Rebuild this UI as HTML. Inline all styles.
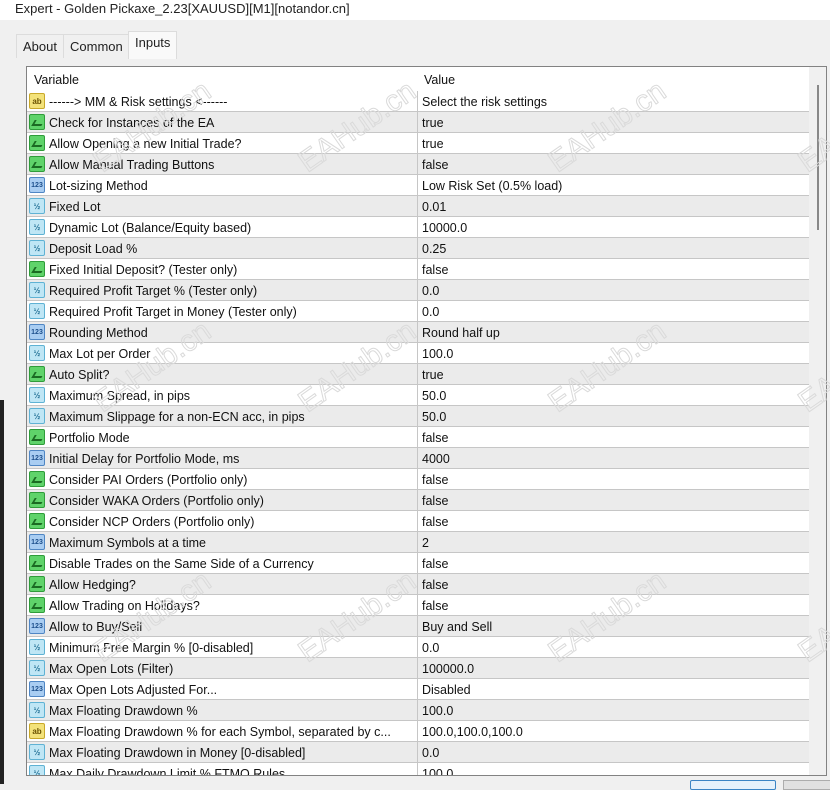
<!DOCTYPE html>
<html><head><meta charset="utf-8"><style>
*{margin:0;padding:0;box-sizing:border-box}
body{width:830px;height:784px;overflow:hidden;background:#f0f0f0;font-family:"Liberation Sans",sans-serif;font-size:12.5px;color:#111;position:relative}
.title{position:absolute;left:15px;top:1px;font-size:13px;color:#222}
.tab{position:absolute;top:34px;height:24px;padding:4px 6px;font-size:13px;color:#222;border:1px solid #dcdcdc;border-bottom:none;background:#f0f0f0}
.tab.act{top:31px;height:28px;background:#f9f9f9;padding-top:3px}
.panel{position:absolute;left:26px;top:66px;width:801px;height:710px;border:1px solid #828282;background:#fff;overflow:hidden}
.hdr{position:absolute;left:0;top:0;height:24px;width:782px;background:#fff}
.hdr span{position:absolute;top:6px}
.row{position:absolute;left:0;width:782px;height:21px;border-bottom:1px solid #c6c6c6}
.row.g{background:#ebebeb}
.row .n{position:absolute;left:22px;top:4px;white-space:nowrap;width:366px;overflow:hidden}
.row .v{position:absolute;left:395px;top:4px;white-space:nowrap}
.row .d{position:absolute;left:390px;top:0;width:1px;height:21px;background:#c6c6c6}
.ic{position:absolute;left:2px;top:2px;width:16px;height:16px;border-radius:2px;font-size:8px;line-height:16px;text-align:center;font-weight:bold}
.ab{background:#f3e27a;border:1px solid #c9a92a;color:#6a5200}
.bo{background:#5fd36a;border:1px solid #2f9c3a}
.bo:after{content:"";position:absolute;left:3px;top:5px;width:8px;height:4px;border-left:2px solid #1b6b23;border-bottom:2px solid #1b6b23;transform:skewX(-30deg)}
.in{background:#a9cdf2;border:1px solid #4f86c4;color:#1d4f8c;font-size:7px}
.db{background:#bfe6f5;border:1px solid #5fb2d4;color:#1f6e93;font-size:8px}
.sb{position:absolute;left:782px;top:0;width:18px;height:710px;background:#f0f0f0}
.th{position:absolute;left:8px;top:18px;width:2px;height:145px;background:#888}
.wm{position:absolute;color:transparent;-webkit-text-stroke:1px #dadada;font-size:30px;transform:rotate(-35deg);font-family:"Liberation Sans",sans-serif;white-space:nowrap}
</style></head><body>
<div style="position:absolute;left:0;top:0;width:830px;height:20px;background:#fff"></div>
<div class="title">Expert - Golden Pickaxe_2.23[XAUUSD][M1][notandor.cn]</div>
<div style="position:absolute;left:0;top:400px;width:4px;height:384px;background:#222"></div>
<div class="tab" style="left:16px">About</div>
<div class="tab" style="left:63px">Common</div>
<div class="tab act" style="left:128px">Inputs</div>
<div class="panel">
<div class="hdr"><span style="left:7px">Variable</span><span style="left:397px">Value</span></div>
<div id="rows"></div>
<div class="sb"><div class="th"></div></div>
</div>
<div style="position:absolute;left:690px;top:780px;width:86px;height:10px;border:1px solid #3b84c4;border-radius:2px;background:#e5f1fb"></div>
<div style="position:absolute;left:783px;top:780px;width:60px;height:10px;border:1px solid #adadad;background:#e1e1e1"></div>
<div class="wm" style="left:85px;top:110px">EAHub.cn</div>
<div class="wm" style="left:290px;top:110px">EAHub.cn</div>
<div class="wm" style="left:540px;top:110px">EAHub.cn</div>
<div class="wm" style="left:85px;top:350px">EAHub.cn</div>
<div class="wm" style="left:290px;top:350px">EAHub.cn</div>
<div class="wm" style="left:540px;top:350px">EAHub.cn</div>
<div class="wm" style="left:85px;top:600px">EAHub.cn</div>
<div class="wm" style="left:290px;top:600px">EAHub.cn</div>
<div class="wm" style="left:540px;top:600px">EAHub.cn</div>
<div class="wm" style="left:790px;top:110px">EAHub.cn</div>
<div class="wm" style="left:790px;top:350px">EAHub.cn</div>
<div class="wm" style="left:790px;top:600px">EAHub.cn</div>
<script>
var d=[["ab","------> MM & Risk settings <------","Select the risk settings"],
["bo","Check for Instances of the EA","true"],["bo","Allow Opening a new Initial Trade?","true"],["bo","Allow Manual Trading Buttons","false"],
["in","Lot-sizing Method","Low Risk Set (0.5% load)"],["db","Fixed Lot","0.01"],["db","Dynamic Lot (Balance/Equity based)","10000.0"],
["db","Deposit Load %","0.25"],["bo","Fixed Initial Deposit? (Tester only)","false"],["db","Required Profit Target % (Tester only)","0.0"],
["db","Required Profit Target in Money (Tester only)","0.0"],["in","Rounding Method","Round half up"],["db","Max Lot per Order","100.0"],
["bo","Auto Split?","true"],["db","Maximum Spread, in pips","50.0"],["db","Maximum Slippage for a non-ECN acc, in pips","50.0"],
["bo","Portfolio Mode","false"],["in","Initial Delay for Portfolio Mode, ms","4000"],["bo","Consider PAI Orders (Portfolio only)","false"],
["bo","Consider WAKA Orders (Portfolio only)","false"],["bo","Consider NCP Orders (Portfolio only)","false"],["in","Maximum Symbols at a time","2"],
["bo","Disable Trades on the Same Side of a Currency","false"],["bo","Allow Hedging?","false"],["bo","Allow Trading on Holidays?","false"],
["in","Allow to Buy/Sell","Buy and Sell"],["db","Minimum Free Margin % [0-disabled]","0.0"],["db","Max Open Lots (Filter)","100000.0"],
["in","Max Open Lots Adjusted For...","Disabled"],["db","Max Floating Drawdown %","100.0"],["ab","Max Floating Drawdown % for each Symbol, separated by c...","100.0,100.0,100.0"],
["db","Max Floating Drawdown in Money [0-disabled]","0.0"],["db","Max Daily Drawdown Limit % FTMO Rules","100.0"]];
var t={ab:"ab",bo:"",in:"123",db:"½"},h="";
d.forEach(function(r,i){h+='<div class="row'+(i%2?' g':'')+'" style="top:'+(24+21*i)+'px"><div class="ic '+r[0]+'">'+t[r[0]]+'</div><div class="n">'+r[1].replace(/</g,"&lt;").replace(/>/g,"&gt;")+'</div><div class="d"></div><div class="v">'+r[2]+'</div></div>';});
document.getElementById("rows").innerHTML=h;
</script>
</body></html>
